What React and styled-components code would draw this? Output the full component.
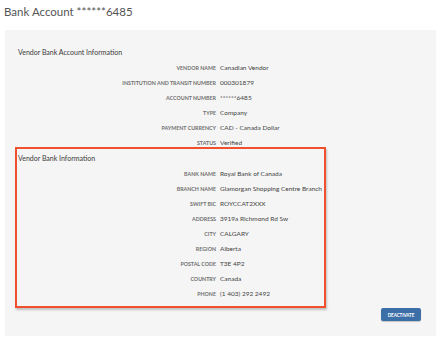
import React from 'react'
import styled, { createGlobalStyle } from 'styled-components'

const GlobalStyle = createGlobalStyle`
  body {
    margin: 0;
    background: #fff;
    font-family: Lato, "Open Sans", sans-serif;
    -webkit-font-smoothing: antialiased;
  }
`

const Page = styled.div`
  width: 441px;
  height: 340px;
  display: flex;
  flex-direction: column;
`

const Title = styled.h1`
  margin: 5px 0 0 4px;
  font-size: 11.5px;
  line-height: 14px;
  font-weight: 400;
  color: #555;
`

const Panel = styled.div`
  margin: 11px 5px 0 5px;
  padding: 15px 15px 15px 13px;
  background: #f5f5f5;
  display: flex;
  flex-direction: column;
`

const Section = styled.div`
  width: ${({ highlighted }) => (highlighted ? '306px' : 'auto')};
  margin: ${({ highlighted }) => (highlighted ? '-3px 0 0 -3px' : '0')};
  padding: ${({ highlighted }) => (highlighted ? '2px 0 5px 1px' : '0')};
  border: ${({ highlighted }) => (highlighted ? '2px solid #f1502f' : 'none')};
  box-shadow: ${({ highlighted }) => (highlighted ? '1px 2px 2px rgba(0, 0, 0, 0.22)' : 'none')};
`

const Heading = styled.h2`
  margin: 0;
  font-size: 7px;
  line-height: 15px;
  font-weight: 400;
  color: #3a3a3a;
`

const Fields = styled.dl`
  margin: 0;
  display: grid;
  grid-template-columns: 198px 1fr;
  column-gap: 4px;
  grid-auto-rows: 15px;
  align-items: center;
`

const Label = styled.dt`
  text-align: right;
  text-transform: uppercase;
  font-size: 5.3px;
  font-weight: 700;
  color: #707070;
  white-space: nowrap;
`

const Value = styled.dd`
  margin: 0;
  font-size: 6.5px;
  color: #444;
  white-space: nowrap;
`

const Actions = styled.div`
  display: flex;
  justify-content: flex-end;
`

const Button = styled.button`
  width: 40px;
  height: 13px;
  padding: 0;
  border: none;
  border-radius: 2px;
  background: #3c6ea8;
  box-shadow: 0 1px 1px rgba(0, 0, 0, 0.2);
  color: #fff;
  font-family: Lato, sans-serif;
  font-size: 4.6px;
  font-weight: 700;
  letter-spacing: -0.1px;
`

const account = [
  ['Vendor Name', 'Canadian Vendor'],
  ['Institution and Transit Number', '000301879'],
  ['Account Number', '******6485'],
  ['Type', 'Company'],
  ['Payment Currency', 'CAD - Canada Dollar'],
  ['Status', 'Verified'],
]

const bank = [
  ['Bank Name', 'Royal Bank of Canada'],
  ['Branch Name', 'Glamorgan Shopping Centre Branch'],
  ['Swift BIC', 'ROYCCAT2XXX'],
  ['Address', '3919a Richmond Rd Sw'],
  ['City', 'CALGARY'],
  ['Region', 'Alberta'],
  ['Postal Code', 'T3E 4P2'],
  ['Country', 'Canada'],
  ['Phone', '(1 403) 292 2492'],
]

const FieldList = ({ rows }) => (
  <Fields>
    {rows.map(([label, value]) => (
      <React.Fragment key={label}>
        <Label>{label}</Label>
        <Value>{value}</Value>
      </React.Fragment>
    ))}
  </Fields>
)

export default function App() {
  return (
    <Page>
      <GlobalStyle />
      <Title>Bank Account ******6485</Title>
      <Panel>
        <Section>
          <Heading>Vendor Bank Account Information</Heading>
          <FieldList rows={account} />
        </Section>
        <Section highlighted>
          <Heading>Vendor Bank Information</Heading>
          <FieldList rows={bank} />
        </Section>
        <Actions>
          <Button>DEACTIVATE</Button>
        </Actions>
      </Panel>
    </Page>
  )
}
